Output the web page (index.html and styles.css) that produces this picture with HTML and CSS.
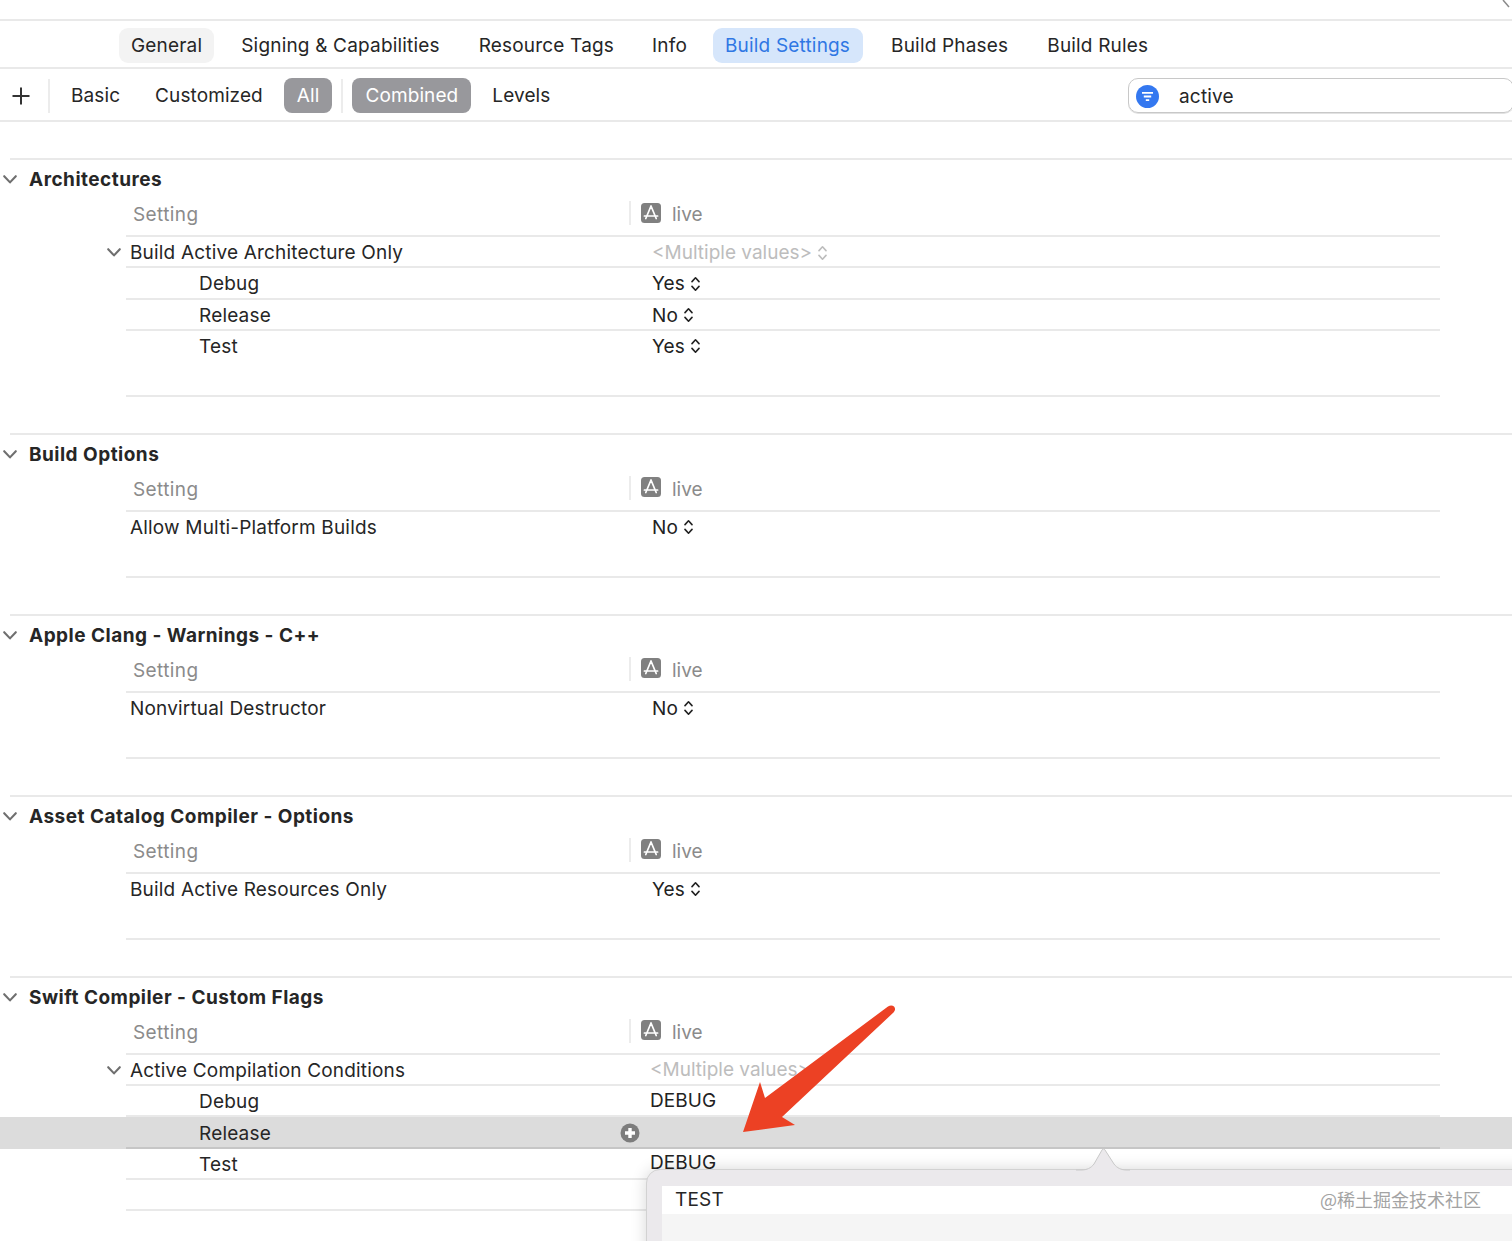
FILE: index.html
```html
<!DOCTYPE html>
<html lang="en">
<head>
    <meta charset="UTF-8">
    <meta name="viewport" content="width=device-width, initial-scale=1.0">
    <title>Build Settings</title>
    <link rel="stylesheet" href="styles.css">
</head>
<body>
    <svg class="defs" width="0" height="0">
        <symbol id="chevron" viewBox="0 0 14 9">
            <path d="M1.2 1.2 7 7.4l5.8-6.2" fill="none" stroke="#6f6f6f" stroke-width="2.1" stroke-linecap="round" stroke-linejoin="round"/>
        </symbol>
        <symbol id="stepper" viewBox="0 0 9 16">
            <path d="M1 5.6 4.5 1.8 8 5.6M1 10.4l3.5 3.8L8 10.4" fill="none" stroke="currentColor" stroke-width="1.6" stroke-linecap="round" stroke-linejoin="round"/>
        </symbol>
        <symbol id="appicon" viewBox="0 0 20 20">
            <rect width="20" height="20" rx="3.5" fill="#808080"/>
            <path d="M10 3 4.8 15.5M10 3l5.2 12.5M3.4 13h13.2" fill="none" stroke="#fff" stroke-width="1.7" stroke-linecap="round"/>
        </symbol>
    </svg>

    <svg class="corner-mark" width="10" height="10" viewBox="0 0 10 10">
        <path d="M1 0 7 7" fill="none" stroke="#8a8a8a" stroke-width="1.5"/>
    </svg>

    <nav class="tabs">
        <a class="tab tab-hover">General</a>
        <a class="tab">Signing &amp; Capabilities</a>
        <a class="tab tab-narrow">Resource Tags</a>
        <a class="tab tab-narrow">Info</a>
        <a class="tab tab-active">Build Settings</a>
        <a class="tab">Build Phases</a>
        <a class="tab">Build Rules</a>
    </nav>

    <div class="filterbar">
        <svg class="plus" width="20" height="20" viewBox="0 0 20 20">
            <path d="M10 1.5v17M1.5 10h17" stroke="#333" stroke-width="2"/>
        </svg>
        <span class="bar-sep bar-sep-first"></span>
        <span class="filter filter-basic">Basic</span>
        <span class="filter filter-custom">Customized</span>
        <span class="filter filter-on filter-all">All</span>
        <span class="bar-sep bar-sep-second"></span>
        <span class="filter filter-on filter-combined">Combined</span>
        <span class="filter filter-levels">Levels</span>
        <div class="search">
            <svg class="search-icon" width="23" height="23" viewBox="0 0 23 23">
                <circle cx="11.5" cy="11.5" r="11.5" fill="#3478f0"/>
                <path d="M6 7.8h11M7.8 11.5h7.4M9.8 15.2h3.4" stroke="#fff" stroke-width="1.8"/>
            </svg>
            <span>active</span>
        </div>
    </div>

    <section class="group">
        <div class="group-rule"></div>
        <h3 class="group-title"><svg class="chev"><use href="#chevron"/></svg>Architectures</h3>
        <div class="col-head">
            <span class="col-name">Setting</span>
            <span class="col-sep"></span>
            <svg class="app-icon"><use href="#appicon"/></svg>
            <span class="col-target">live</span>
        </div>
        <div class="row">
            <div class="row-gutter"><svg class="chev"><use href="#chevron"/></svg></div>
            <div class="row-inner">
                <span class="name">Build Active Architecture Only</span>
                <span class="value muted">&lt;Multiple values&gt;<svg class="step"><use href="#stepper"/></svg></span>
            </div>
        </div>
        <div class="row">
            <div class="row-gutter"></div>
            <div class="row-inner">
                <span class="name sub">Debug</span>
                <span class="value">Yes<svg class="step"><use href="#stepper"/></svg></span>
            </div>
        </div>
        <div class="row">
            <div class="row-gutter"></div>
            <div class="row-inner">
                <span class="name sub">Release</span>
                <span class="value">No<svg class="step"><use href="#stepper"/></svg></span>
            </div>
        </div>
        <div class="row row-last">
            <div class="row-gutter"></div>
            <div class="row-inner">
                <span class="name sub">Test</span>
                <span class="value">Yes<svg class="step"><use href="#stepper"/></svg></span>
            </div>
        </div>
    </section>

    <section class="group">
        <div class="group-rule"></div>
        <h3 class="group-title"><svg class="chev"><use href="#chevron"/></svg>Build Options</h3>
        <div class="col-head">
            <span class="col-name">Setting</span>
            <span class="col-sep"></span>
            <svg class="app-icon"><use href="#appicon"/></svg>
            <span class="col-target">live</span>
        </div>
        <div class="row row-last">
            <div class="row-gutter"></div>
            <div class="row-inner">
                <span class="name">Allow Multi-Platform Builds</span>
                <span class="value">No<svg class="step"><use href="#stepper"/></svg></span>
            </div>
        </div>
    </section>

    <section class="group">
        <div class="group-rule"></div>
        <h3 class="group-title"><svg class="chev"><use href="#chevron"/></svg>Apple Clang - Warnings - C++</h3>
        <div class="col-head">
            <span class="col-name">Setting</span>
            <span class="col-sep"></span>
            <svg class="app-icon"><use href="#appicon"/></svg>
            <span class="col-target">live</span>
        </div>
        <div class="row row-last">
            <div class="row-gutter"></div>
            <div class="row-inner">
                <span class="name">Nonvirtual Destructor</span>
                <span class="value">No<svg class="step"><use href="#stepper"/></svg></span>
            </div>
        </div>
    </section>

    <section class="group">
        <div class="group-rule"></div>
        <h3 class="group-title"><svg class="chev"><use href="#chevron"/></svg>Asset Catalog Compiler - Options</h3>
        <div class="col-head">
            <span class="col-name">Setting</span>
            <span class="col-sep"></span>
            <svg class="app-icon"><use href="#appicon"/></svg>
            <span class="col-target">live</span>
        </div>
        <div class="row row-last">
            <div class="row-gutter"></div>
            <div class="row-inner">
                <span class="name">Build Active Resources Only</span>
                <span class="value">Yes<svg class="step"><use href="#stepper"/></svg></span>
            </div>
        </div>
    </section>

    <section class="group">
        <div class="group-rule"></div>
        <h3 class="group-title"><svg class="chev"><use href="#chevron"/></svg>Swift Compiler - Custom Flags</h3>
        <div class="col-head">
            <span class="col-name">Setting</span>
            <span class="col-sep"></span>
            <svg class="app-icon"><use href="#appicon"/></svg>
            <span class="col-target">live</span>
        </div>
        <div class="row">
            <div class="row-gutter"><svg class="chev"><use href="#chevron"/></svg></div>
            <div class="row-inner">
                <span class="name">Active Compilation Conditions</span>
                <span class="value value-text muted">&lt;Multiple values&gt;</span>
            </div>
        </div>
        <div class="row">
            <div class="row-gutter"></div>
            <div class="row-inner">
                <span class="name sub">Debug</span>
                <span class="value value-text">DEBUG</span>
            </div>
        </div>
        <div class="row row-selected">
            <div class="row-gutter"></div>
            <div class="row-inner">
                <span class="name sub">Release
                    <svg class="add" width="20" height="20" viewBox="0 0 20 20">
                        <circle cx="10" cy="10" r="9.5" fill="#7d7d7d"/>
                        <path d="M10 5v10M5 10h10" stroke="#fff" stroke-width="3.4"/>
                    </svg>
                </span>
                <span class="value value-text"></span>
            </div>
        </div>
        <div class="row">
            <div class="row-gutter"></div>
            <div class="row-inner">
                <span class="name sub">Test</span>
                <span class="value value-text">DEBUG</span>
            </div>
        </div>
        <div class="row">
            <div class="row-gutter"></div>
            <div class="row-inner"></div>
        </div>
    </section>

    <div class="popover">
        <svg class="popover-caret" width="54" height="23" viewBox="0 0 54 23">
            <path d="M0 22h5c6 0 10-2 13-6L26 2c1-1.5 2-1.500 3 0l9 14c3 4 7 6 13 6h3" fill="#ebe9ec" stroke="#c9c9c9" stroke-width="1"/>
        </svg>
        <div class="popover-list">
            <div class="popover-item">TEST</div>
        </div>
    </div>

    <span class="watermark">@稀土掘金技术社区</span>

    <svg class="arrow" width="160" height="135" viewBox="0 0 160 135">
        <path d="M147 1.500c2-1.500 4.500-1.500 6 0s1.500 4-.5 6L41 112l13 8-52 7 17-50 5 16z" fill="#ec4124"/>
    </svg>
</body>
</html>
```

FILE: styles.css
```css
html, body {
    margin: 0;
    height: 1241px;
    overflow: hidden;
}
body {
    position: relative;
    background: #fff;
    color: #262626;
    font-family: Inter, "Noto Sans", sans-serif;
    font-size: 19px;
    letter-spacing: 0.18px;
    padding-top: 19px;
    box-sizing: border-box;
}
.defs {
    position: absolute;
}
.corner-mark {
    position: absolute;
    top: 0;
    right: 0;
}

/* top tabs */
.tabs {
    display: flex;
    align-items: center;
    height: 43px;
    padding: 3px 0 0 119px;
    border-top: 2px solid #e9e9e9;
    border-bottom: 2px solid #e9e9e9;
}
.tab {
    padding: 0 12px;
    height: 35px;
    line-height: 35px;
    border-radius: 9px;
    margin-right: 15px;
}
.tab-narrow {
    margin-right: 14px;
}
.tab-hover {
    background: #f3f3f3;
}
.tab-active {
    background: #d6e6fb;
    color: #2f77e4;
    padding-right: 13px;
    margin-right: 16px;
}

/* filter bar */
.filterbar {
    display: flex;
    align-items: center;
    height: 49px;
    padding-top: 2px;
    border-bottom: 2px solid #e9e9e9;
    margin-bottom: 36px;
}
.plus {
    margin-left: 11px;
}
.bar-sep {
    width: 2px;
    height: 34px;
    background: #ececec;
}
.bar-sep-first {
    margin-left: 17px;
}
.bar-sep-second {
    margin-left: 9px;
}
.filter {
    height: 35px;
    line-height: 36px;
    padding: 0 13px;
    border-radius: 8px;
    letter-spacing: 0.1px;
}
.filter-basic {
    margin-left: 8px;
}
.filter-custom {
    margin-left: 9px;
}
.filter-all {
    margin-left: 8px;
}
.filter-combined {
    margin-left: 9px;
}
.filter-levels {
    margin-left: 8px;
}
.filter-on {
    background: #98989c;
    color: #fff;
}
.search {
    display: flex;
    align-items: center;
    gap: 20px;
    margin-left: auto;
    width: 386px;
    height: 35px;
    box-sizing: border-box;
    padding: 2px 0 0 7px;
    margin-right: -2px;
    border: 1px solid #c8c8c8;
    border-radius: 10px;
    box-shadow: 0 1px 0 #e2e2e2;
}

/* setting groups */
.group {
    margin-bottom: 36px;
}
.group-rule {
    height: 2px;
    margin-left: 10px;
    background: #e9e9e9;
}
.group-title {
    display: flex;
    align-items: center;
    height: 35px;
    margin: 0;
    padding: 2px 0 0 3px;
    font-size: 19px;
    font-weight: 700;
    letter-spacing: 0.48px;
}
.group-title .chev {
    margin-right: 12px;
}
.chev {
    width: 14px;
    height: 9px;
    flex: none;
}
.col-head {
    display: flex;
    align-items: center;
    height: 35px;
    margin: 0 72px 0 126px;
    padding-bottom: 3px;
    border-bottom: 2px solid #e9e9e9;
    color: #8b8b8b;
}
.col-name {
    width: 496px;
    padding-left: 7px;
    letter-spacing: 0.4px;
}
.col-sep {
    width: 2px;
    height: 24px;
    margin-bottom: 3px;
    background: #ececec;
}
.app-icon {
    width: 20px;
    height: 20px;
    margin: 0 11px 4px 10px;
}
.col-target {
    letter-spacing: 0;
}

.row {
    display: flex;
    height: 31.3px;
}
.row-gutter {
    display: flex;
    align-items: center;
    justify-content: flex-end;
    width: 126px;
    padding-right: 5px;
    box-sizing: border-box;
}
.row-inner {
    display: flex;
    align-items: center;
    flex: 1;
    box-sizing: border-box;
    padding-top: 2px;
    margin-right: 72px;
    border-bottom: 2px solid #e9e9e9;
}
.row-last {
    height: 66px;
    align-items: flex-start;
}
.row-last .row-gutter {
    height: 31px;
}
.row-last .row-inner {
    height: 66px;
    padding-bottom: 35px;
}
.row-selected {
    background: #dcdcdc;
}
.row-selected .row-inner {
    border-bottom-color: #c6c6c6;
}
.name {
    display: flex;
    align-items: center;
    justify-content: space-between;
    width: 526px;
    box-sizing: border-box;
    padding-left: 4px;
    padding-right: 12px;
}
.name.sub {
    padding-left: 73px;
}
.add {
    margin-bottom: 1px;
}
.value {
    display: flex;
    align-items: center;
    color: #222;
    letter-spacing: 0.1px;
}
.value-text {
    margin-left: -2px;
    padding-bottom: 3px;
}
.muted {
    color: #bdbdbd;
    letter-spacing: 0;
}
.step {
    width: 9px;
    height: 16px;
    margin-left: 6px;
}

/* completion popover */
.popover {
    position: absolute;
    left: 646px;
    top: 1169px;
    width: 900px;
    height: 100px;
    padding: 16px 0 0 15px;
    box-sizing: border-box;
    background: #ebe9ec;
    border: 1px solid #d2d2d2;
    border-radius: 14px 0 0 0;
    box-shadow: 0 0 16px rgba(0, 0, 0, 0.16);
}
.popover-caret {
    position: absolute;
    left: 429px;
    top: -22px;
}
.popover-list {
    background: #f5f5f5;
    height: 90px;
}
.popover-item {
    height: 28px;
    line-height: 28px;
    padding-left: 13px;
    background: #fff;
}
.watermark {
    position: absolute;
    left: 1320px;
    top: 1186px;
    color: #a3a3a3;
    font-family: "Noto Sans CJK SC", sans-serif;
    font-size: 18px;
    letter-spacing: 0;
}
.arrow {
    position: absolute;
    left: 741px;
    top: 1005px;
}
```
